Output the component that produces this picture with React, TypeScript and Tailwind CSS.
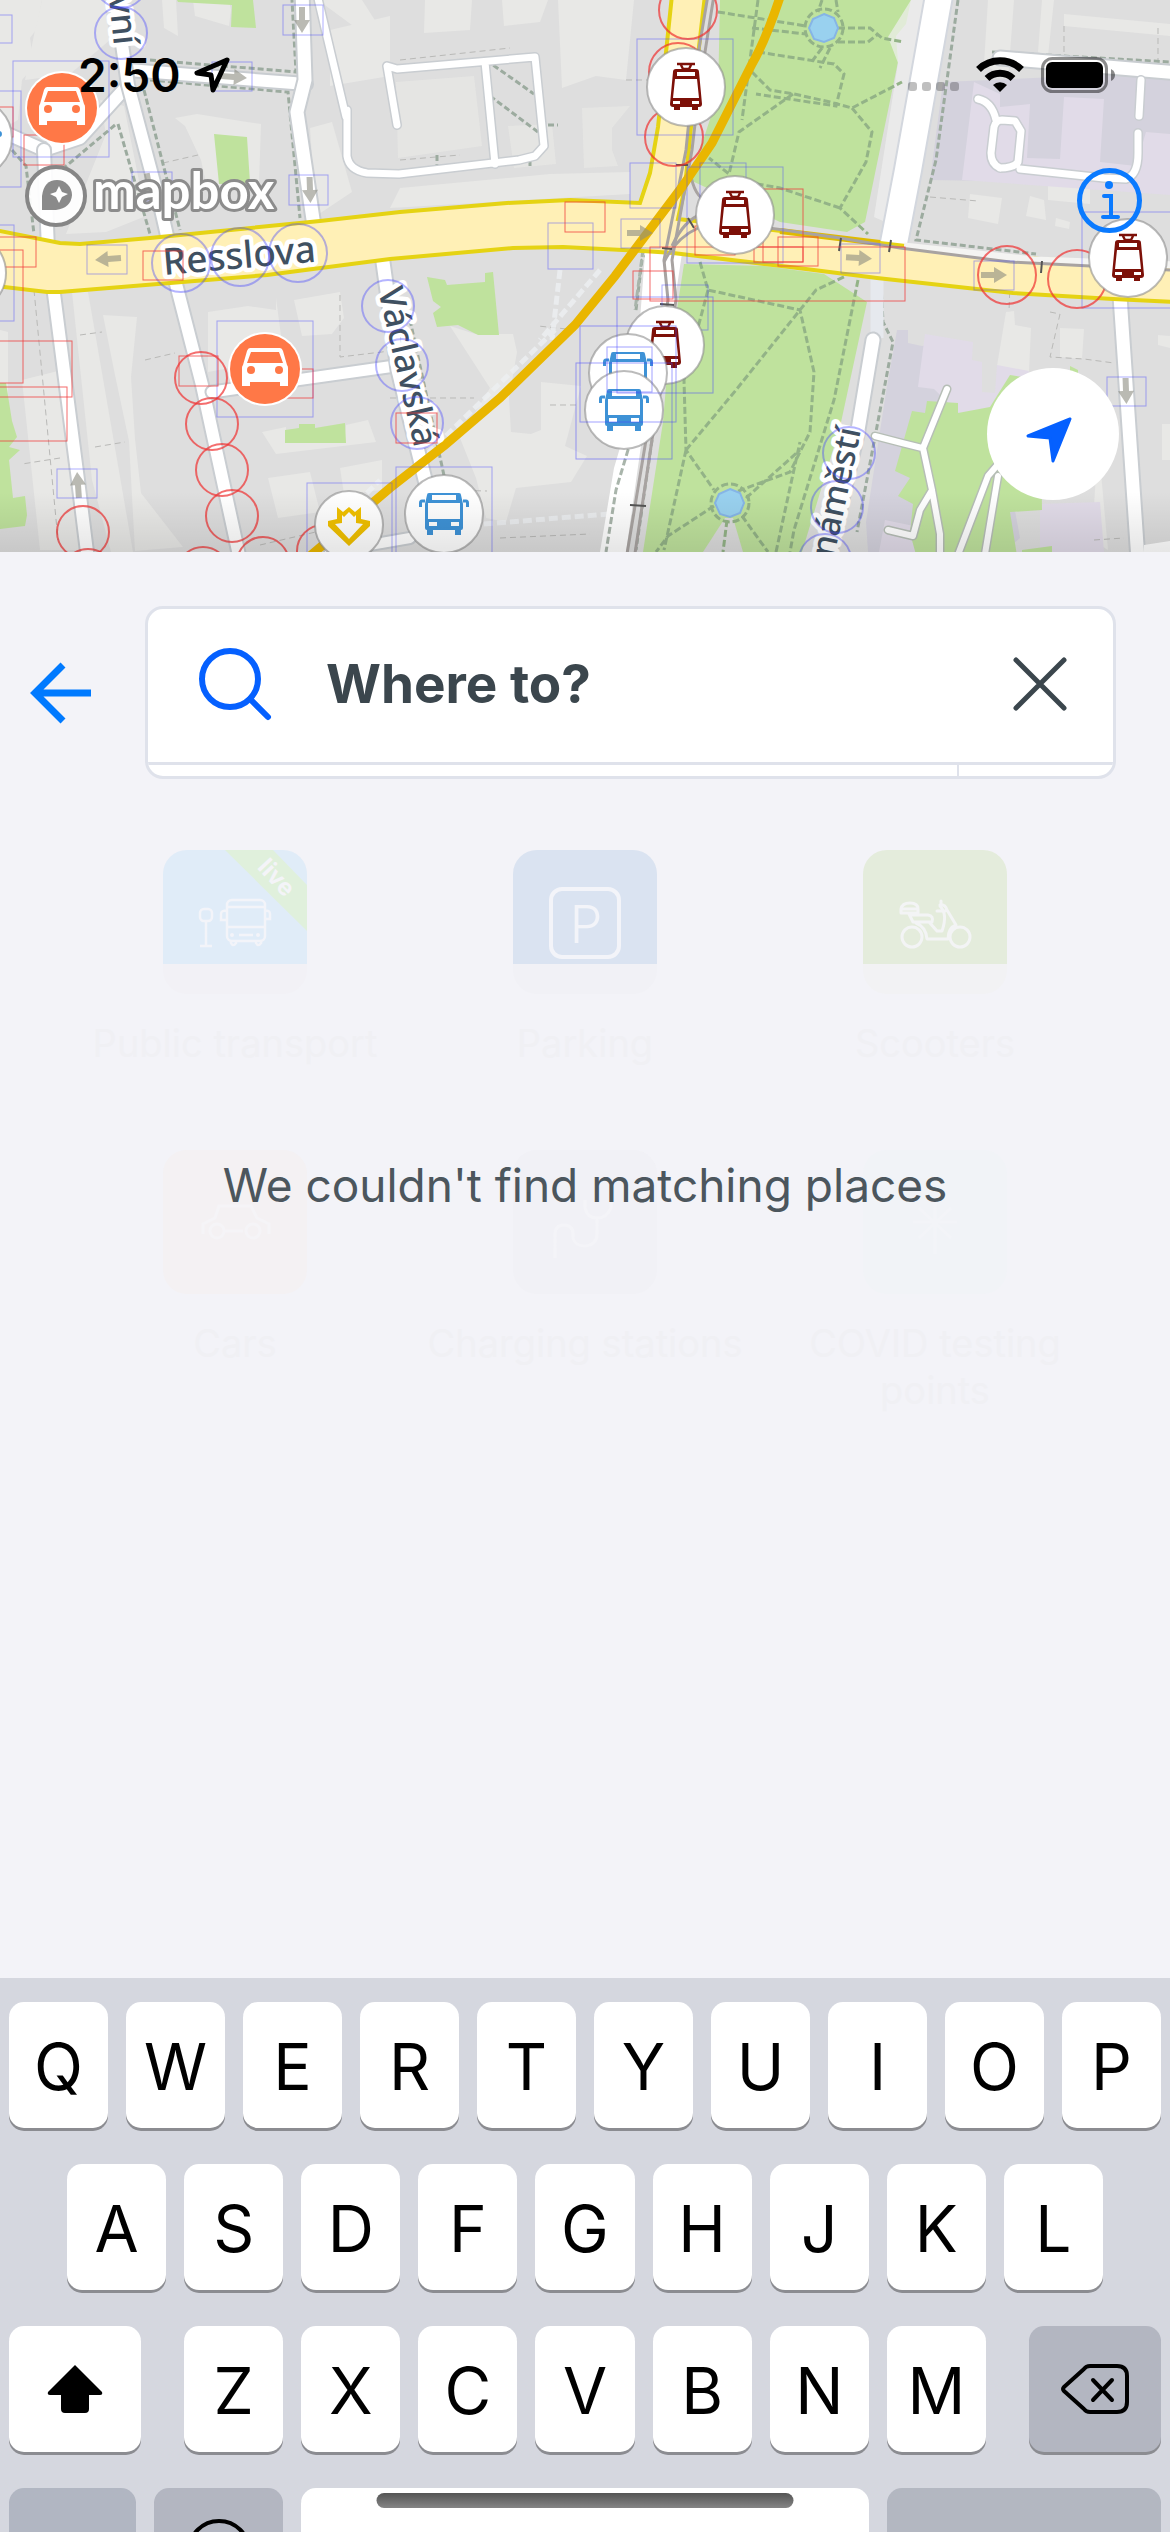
import React from "react";

const CASING = "#c9cdd1";

function Road({ d, w = 12, casing = CASING, edge = 4 }: { d: string; w?: number; casing?: string; edge?: number }) {
  return (
    <g fill="none" strokeLinejoin="round" strokeLinecap="round">
      <path d={d} stroke={casing} strokeWidth={w + edge} />
      <path d={d} stroke="#fff" strokeWidth={w} />
    </g>
  );
}

function Pin({ x, y, r = 39, children }: { x: number; y: number; r?: number; children?: React.ReactNode }) {
  return (
    <g transform={`translate(${x} ${y})`}>
      <circle r={r} fill="#fff" stroke="#8e8e8e" strokeOpacity={0.6} strokeWidth={2} />
      {children}
    </g>
  );
}

function TramIcon() {
  return (
    <g>
      <path d="M-9-23H9M-5-22l2 4M5-22l-2 4M-4-18H4" stroke="#7d1008" strokeWidth={2.4} fill="none" />
      <path fillRule="evenodd" fill="#7d1008" d="M-10-18H10q3 0 3 3L16 17q0 3-3 3h-1v3h-6v-3h-12v3h-6v-3h-1q-3 0-3-3L-13-15q0-3 3-3zM-9-15v4H9v-4zM-11-8L-13 11H13L11-8zM-13 14v3h7v-3zM6 14v3h7v-3z" />
    </g>
  );
}

function BusIcon() {
  return (
    <g fill="#3e92d6">
      <path fillRule="evenodd" d="M-15-21H15q2 0 2 2l2 9V14q0 2-2 2H17v5h-6v-5H-11v5h-6v-5q-2 0-2-2V-10l2-9q0-2 2-2zM-12-19v5H12v-5zM-16-11V5H16V-11zM-15 8v4h8V8zM7 8v4h8V8z" />
      <path d="M-19-13h-3q-1.500 0-1.500 2v4M19-13h3q1.500 0 1.500 2v4" fill="none" stroke="#3e92d6" strokeWidth={3} />
    </g>
  );
}

function CarPin({ x, y }: { x: number; y: number }) {
  return (
    <g transform={`translate(${x} ${y})`}>
      <circle r={37} fill="#fff" />
      <circle r={35} fill="#ff7847" />
      <path d="M-15-21H15q2 0 3 3L22-4q1 1 1 3V17h-8v-4H-15v4h-8V-1q0-2 1-3L-18-18q1-3 3-3zM-14-17L-18-6H18L14-17z" fill="#fff" fillRule="evenodd" />
      <circle cx={-14} cy={1} r={4} fill="#ff7847" />
      <circle cx={14} cy={1} r={4} fill="#ff7847" />
    </g>
  );
}

const blueBoxes = [
  [13, 61, 96, 96], [-5, 91, 26, 96], [-5, 15, 17, 28], [283, 5, 40, 30], [212, 62, 40, 29], [132, 172, 40, 29],
  [289, 175, 39, 30], [87, 245, 40, 29], [637, 39, 96, 96], [630, 163, 46, 45], [700, 163, 46, 45], [687, 167, 96, 96],
  [548, 223, 45, 46], [621, 219, 39, 29], [841, 244, 39, 29], [974, 261, 40, 29], [1082, 212, 96, 96], [57, 469, 40, 29],
  [217, 321, 96, 96], [307, 483, 85, 96], [-5, 225, 19, 96], [396, 467, 96, 96], [662, 285, 46, 45], [1107, 377, 39, 29],
];
const redBoxes = [
  [24, 135, 40, 30], [-5, 107, 18, 30], [-5, 237, 41, 30], [-5, 250, 28, 133], [143, 251, 40, 29], [565, 202, 40, 30],
  [650, 247, 255, 54], [633, 271, 40, 28], [695, 226, 40, 29], [754, 247, 49, 15], [778, 237, 40, 29], [763, 189, 40, 73],
  [-5, 341, 77, 56], [-5, 387, 72, 54], [179, 356, 39, 30], [283, 369, 30, 29], [396, 413, 41, 30],
];
const blueCircles = [
  [121, -18], [121, 33], [181, 263], [240, 257], [298, 253], [388, 306], [402, 365], [417, 423], [849, 453], [837, 507], [825, 560],
];
const redCircles = [
  [201, 378, 26], [212, 424, 26], [222, 470, 26], [232, 516, 26], [83, 532, 26], [263, 563, 26], [203, 573, 26],
  [88, 575, 26], [323, 551, 26], [688, 10, 29], [678, 72, 29], [674, 137, 29], [1007, 275, 29], [1077, 279, 29],
];
const arrows = [
  [302, 20, 90], [234, 77, 4], [149, 186, 80], [310, 190, 88], [108, 259, 176], [78, 485, -94], [640, 233, 0],
  [859, 258, 3], [994, 275, 0], [1126, 391, 88],
];

function CityMap() {
  return (
    <svg aria-label="Map of Prague" role="img" viewBox="0 0 1170 552" preserveAspectRatio="xMidYMid slice" className="block h-[552px] w-full">
      <defs>
        <linearGradient id="mapFade" x1="0" y1="0" x2="0" y2="1">
          <stop offset="0" stopColor="#000" stopOpacity="0" />
          <stop offset="1" stopColor="#000" stopOpacity="0.1" />
        </linearGradient>
      </defs>
      <rect width={1170} height={552} fill="#dedede" />

      {/* courtyards and open ground */}
      <g fill="#e8e8e6">
        <path d="M0 0h42l-6 30-6 8 4 28-12 14-4 40-18 10z" />
        <path d="M42 0h62l6 40-40 34-45 6 10-50zM162 0h14l2 36-14-8zM193 0h36l2 10-2 16-34-10z" />
        <path d="M318 0h44l14 22-20 6zM330 30l60-14v60l-60 10zM100 100l24 6 22 110-40 16-40 2 40-100z" />
        <path d="M175 118l22-4 50 8 14 2-2 60-52 4-6-28-16-34z" />
        <path d="M310 128l22-6 20 70-36 24z" />
        <path d="M425 0h47l-2 30-46 3zM502 0h46l-8 22-36 4zM558 0h76l-8 80-30-4-34 12z" />
        <path d="M582 108l48-2-18 22v22l6 16-34 2zM412 110l10-6 10 6v18l-18-2zM508 126l44-2 4 40-42 4zM396 82l78-6 8 70-84 12z" opacity={0.7} />
        <path d="M400 188l150-14 80-2v22l-240 14z" />
        <path d="M72 292h16l45 260h-22L92 480zM103 315l34 2-6 60 4 62 6 54 42 54-48 4-6-110-14-66z" />
        <path d="M208 312l40-6 28 4v-12l8 60-76 14zM294 300l46-8 4 26-12 16-30 2z" />
        <path d="M262 432l24-5v16h58l2-18 22-5 8 22-100 12zM268 478l42-6 10 40-42 6zM340 468l42-8v30l-38 4z" />
        <path d="M0 330l8 2v60l-8 40zM22 380l40-10 24 180H40z" />
        <path d="M450 326l25 8h38l4 18-8 46 2 34 20 2 10-4v-48l40 4-16 60 22 10-16 26-55 6-10 34-20-4-10-40-16-40 30-50z" />
        <path d="M988 0h26l-6 80-24-16zM1042 0h12l-6 56-10-4zM1064 14l106 10v12l-106-10z" />
        <path d="M970 194l32 4-4 26-30-6zM1030 196l14 4 2 20-20-4zM1048 186h42v18l-42-4zM1056 218l14 4-1 7-14-3z" />
        <path d="M1006 312l8-1 1 14 16 3-2 44-32-6zM1060 328l24 1-2 30-22-2zM1158 335l12 1v12l-12-3zM1162 424h8v36h-8z" />
        <path d="M1092 540l6-100 10 110z" />
      </g>
      {/* institution grounds */}
      <path d="M943 82l227-10v112l-240-4z" fill="#d4d2dd" />
      <path d="M974 82l26 12v13l30-3-3 54 33 1 4-62 40 2-4 63 36 4 10-34 24 2v61l-208-15z" fill="#e1dbe8" />
      <path d="M897 330h11v13l14 3 38-6v60l40 28 20 110-16 14H868l-2-30 20-130z" fill="#d4d2dd" />
      <path d="M925 334l48 8-1 18 10 2v30l13 1 2-28 32 6-6 40-56 10-33-32-16-2zM885 520l48 10v22h-54zM1040 504l60-2 4 50h-64z" fill="#e1dbe8" />

      {/* building outlines */}
      <g fill="none" stroke="#b9b9b7" strokeWidth={1} strokeDasharray="6 4">
        <path d="M34 290l24 250M80 335l22-3M145 360l30-7M163 163l35-8M95 447l30-5M340 295v62l50-6M60 458l-38 6M390 398h84M576 330l-38-4M260 545l60-14M550 405h26M445 490l42 1M500 538l90-4M930 197l48 4M1050 312l10 2-10 43 34 2 30 4" />
        <path d="M400 60l110-12M626 80h22M400 160l60-5M1064 26v26M1158 28v50M1010 282l-1 30M1094 540l30-2" />
      </g>

      {/* green areas */}
      <g fill="#bfe29d">
        <path d="M177 0h76l3 28-25-1 1-22-54-3zM214 134l33 3 3 46-31 1zM285 430l14-2v-4h16v4l30-5 1 20h-61zM0 383h6l6 38 5 16-8 10 11 3-11 10 4 38 12-2 2 19-2 11-25 3z" />
        <path d="M427 277l18 3 2 5 38-3v-9l8-1 6 63h-21l-20-10-21 2-4-14 8-6-8-6z" />
        <path d="M720 0h191l-5 24-10 12 2 26-33 160-18 10-67-10-90-42 28-85z" />
        <path d="M684 264l80 2 60 8 43 28-27 125-38 125H643l20-130 4-48z" />
        <path d="M912 411l13 2 2-12 31 2v10l32-6 20-32 30 5 2 130-32 2 8 50H918l-8-29 3-29-15-8 12-18-15-7z" />
        <path d="M1070 366l8 4v6l-8-4zM1022 550l30-4v6h-30z" />
      </g>
      <path d="M725 518h8l10 34h-40z" fill="#dcdcdc" />
      <path d="M911 0h14L892 225l-18-8 24-154-10-26z" fill="#f0f0f0" opacity={0.7} />

      {/* footpaths */}
      <g fill="none" stroke="#93b387" strokeWidth={3} strokeDasharray="7 3">
        <path d="M718 12l88 14M752 28l54 6M758 52l76 12 10 10-8 32-80-12M752 72l18 18 24 4 36 8 22 6 50-26M852 108l20 24-6 30-26 46 28 26M840 208l-60-20-34-6M793 94l-54 38-10 42-20-16M758 0l-16 120" />
        <path d="M838 28l32 0 12 10 22 4M838 42l30 0 10-8M822 48l-12 16M830 48l-10 20M822 0l-4 12M836 0l2 12" />
        <circle cx={824} cy={28} r={19} />
        <circle cx={730} cy={503} r={19} />
        <path d="M700 262l8 28 92 20 14 62-4 60-20 40-60 22M708 290l-24 90 2 70 28 40M686 450l50-60 80-100 30-14M746 498l54-48M714 506l-46 30-12 16M742 516l26 36M686 450l-22 100M858 280l-24 120-40 130-4 22M727 520l-4 32M776 552l24-110" />
      </g>
      <g fill="none" stroke="#9cab9f" strokeWidth={3} strokeDasharray="6 3">
        <path d="M150 60l146 12-4-72M150 80l138 12 12 126M144 90l36 140M115 125l-50 42M118 124l32 110M12 150l14 16 8 68M958 0l-22 160-20 80 120 14M992 52l178 10M410 320l35 160M636 310l6-50 6-6M652 440l-16 110M881 284l2 38 10 20-36 190" />
        <path d="M486 60l48 34M490 96l48 36M548 125h10M437 155v12M530 160v6" />
      </g>
      <g fill="none" stroke="#eceff1" strokeWidth={5} strokeDasharray="9 4" opacity={0.8}>
        <path d="M390 490L555 330M330 530l50-50M484 524l150-12M560 270l-8 70M600 270l-60 70" />
      </g>

      {/* streets */}
      <Road d="M-6 128L44 150 80 138 128 85" />
      <Road d="M44 150L48 250M53 286L78 480 88 560" />
      <Road d="M128 70L306 84" />
      <Road d="M114-10L128 85 160 205 168 240M175 280L202 385 240 560" />
      <Road d="M302-10L305 80 297 112 314 226" w={13} />
      <Road d="M316-10L346 117M347 110v46q2 14 20 17l32 1 120-14 16-4 9-10L535 57 397 69 387 66 397 125M485 62l10 102" w={7} edge={3} />
      <Road d="M212 392L395 366" w={11} />
      <Road d="M382 255L398 370 430 500 432 520" w={13} />
      <Road d="M330 552l80-14" w={10} />
      <Road d="M940-10L908 170 893 248" w={26} casing="#d3d7de" />
      <path d="M877 274v64" stroke="#e6e9ee" strokeWidth={13} />
      <Road d="M873 340L858 430 828 560" w={13} />
      <Road d="M1000 58L1180 73" w={13} />
      <Road d="M1141 80L1139 116M1138 133v20q0 22-12 26l-22-1-84-9M1000 168q-9-4-9-15l3-26q2-7 8-7l13 1 6 10-3 31q-4 6-18 6M996 120q-4-18-18-21" w={7} edge={3} />
      <Road d="M1120 296L1138 560" w={13} />
      <path d="M1144 545l26-4v14h-26z" fill="#fff" />
      <Road d="M875 436l27 7 20 5M947 389l-24 59 9 42 8 44v26M932 490l-12 20-7 26-25-6M956 560l32-84 12-14M984 560l14-84" w={6} edge={3} casing="#b6beb6" />
      <path d="M646 240h38l-12 80-26 90-20 142h-26l14-84 20-68z" fill="#fff" />
      <path d="M643 250l-8 60M634 430l-18 60-10 62" stroke="#a9b5ab" strokeWidth={3} strokeDasharray="7 3" fill="none" />

      {/* main avenue */}
      <path
        d="M-5 230L60 243 80 244 150 238 320 221 400 212 507 203 570 200 640 203 650 173 658 127 667 43 672-5H705L699 47 691 127 685 187 678 219 773 230 880 243 1000 257 1175 266V302L1113 299 1013 293 877 278 790 267 673 253 643 251 563 247 513 248 390 259 267 275 60 292 47 292-5 286z"
        fill="#fff0b6" stroke="#e5d313" strokeWidth={4}
      />
      <path d="M780 231l100 12" stroke="#dfba00" strokeWidth={6} />
      <path d="M904 246l130 14 141 5" stroke="#f4f4f2" strokeWidth={7} fill="none" />
      {/* tram tracks */}
      <g fill="none" stroke="#a8a3a1" strokeWidth={3}>
        <path d="M708-5L692 90 686 150 664 260 668 300 646 440 626 560M714-5L699 90 692 150 672 260 676 300 652 440 634 560" />
        <path d="M690 168q2 24 14 32M672 246q12-26 30-32M664 262q12-24 34-34" />
        <path d="M700 200l40 24 100 14 60 10 110 14 160 8" />
      </g>
      <path d="M676 165h12M662 248l10 1M688 218l6 10M630 505l16 1M660 304l14 1M841 238l-2 13M891 240l-2 12M1042 261l-1 12" stroke="#555" strokeWidth={2} />

      {/* metro line */}
      <path d="M781-6Q766 40 752 64L712 143 682 187 615 276 575 325 500 398 445 445 390 488 310 556" fill="none" stroke="#e9b600" strokeWidth={9} />

      {/* ponds */}
      <path d="M824 14l10 4 4 10-4 10-10 4-10-3-5-11 4-9z" fill="#99d1ef" stroke="#86b5e6" strokeWidth={2} />
      <path d="M730 489l10 4 4 10-4 10-10 4-10-3-5-11 4-9z" fill="#99d1ef" stroke="#86b5e6" strokeWidth={2} />

      {arrows.map(([x, y, a], i) => (
        <path key={i} transform={`translate(${x} ${y}) rotate(${a})`} d="M-13-3H0V-8L13 0 0 8V3H-13z" fill="#8c8c80" fillOpacity={0.6} />
      ))}

      {/* street names */}
      <g fontFamily='"Noto Sans", "Open Sans", sans-serif' fontWeight={500} fill="#3f5061" stroke="#fff" strokeWidth={9} strokeLinejoin="round" paintOrder="stroke">
        <text transform="translate(164 275) rotate(-5)" fontSize={37}>Resslova</text>
        <text transform="translate(378 290) rotate(77)" fontSize={35}>Václavská</text>
        <text transform="translate(114 46) rotate(84)" textAnchor="end" fontSize={35}>vní</text>
        <text transform="translate(861 430) rotate(-78)" textAnchor="end" fontSize={34}>náměstí</text>
      </g>

      {/* collision outlines */}
      <g fill="none" stroke="#4646ff" strokeOpacity={0.45} strokeWidth={1}>
        {blueBoxes.map(([x, y, w, h], i) => <rect key={i} x={x} y={y} width={w} height={h} />)}
      </g>
      <g fill="none" stroke="#4646ff" strokeOpacity={0.4} strokeWidth={2}>
        {blueCircles.map(([x, y], i) => <circle key={i} cx={x} cy={y} r={i > 1 && i < 5 ? 29 : 26} />)}
      </g>
      <g fill="none" stroke="#f03838" strokeOpacity={0.75} strokeWidth={1}>
        {redBoxes.map(([x, y, w, h], i) => <rect key={i} x={x} y={y} width={w} height={h} />)}
      </g>
      <g fill="none" stroke="#f03030" strokeOpacity={0.7} strokeWidth={2}>
        {redCircles.map(([x, y, r], i) => <circle key={i} cx={x} cy={y} r={r} />)}
      </g>

      {/* stops and vehicles */}
      <Pin x={-27} y={138} />
      <circle cx={-1} cy={134} r={3} fill="#3e92d6" />
      <Pin x={-33} y={273} />
      <Pin x={686} y={87}><TramIcon /></Pin>
      <Pin x={735} y={215}><TramIcon /></Pin>
      <Pin x={1128} y={258}><TramIcon /></Pin>
      <Pin x={665} y={345}><TramIcon /></Pin>
      <Pin x={628} y={373}><BusIcon /></Pin>
      <Pin x={624} y={410}><BusIcon /></Pin>
      <Pin x={444} y={514}><BusIcon /></Pin>
      <Pin x={349} y={525} r={34}>
        <path fillRule="evenodd" fill="#f0c000" d="M-12-18L-6-13 0-18 6-13 12-18V-6L21-4V1L0 21-21 1V-4L-12-6zM-7-10V-2L-14-1 0 14 14-1 7-2V-10L5-8 0-13-5-8z" />
      </Pin>
      <CarPin x={62} y={108} />
      <CarPin x={265} y={369} />
      <g fill="none" stroke="#4646ff" strokeOpacity={0.5}>
        <rect x={607} y={347} width={45} height={45} />
        <rect x={576} y={363} width={96} height={96} />
        <rect x={580} y={326} width={96} height={96} />
        <rect x={617} y={297} width={96} height={96} />
      </g>

      {/* mapbox attribution */}
      <circle cx={56} cy={196} r={29} fill="#fff" fillOpacity={0.92} stroke="#868686" strokeWidth={4} />
      <path d="M42 210V196Q44 180 57 180A15 15 0 0 1 72 195Q71 208 56 210z" fill="#8a8a8a" />
      <path d="M59 186l3 6 6 2-6 3-3 6-3-6-6-3 6-2z" fill="#fff" />
      <text x={93} y={209} fontFamily="Lato, sans-serif" fontWeight={700} fontSize={51} fill="#fff" stroke="#8c8c8c" strokeWidth={6} strokeLinejoin="round" paintOrder="stroke">mapbox</text>

      <rect y={492} width={1170} height={60} fill="url(#mapFade)" />
    </svg>
  );
}

function StatusBar() {
  return (
    <div className="absolute inset-x-0 top-0 flex h-[150px] items-center justify-between pr-[54px] pl-[78px] text-black">
      <div className="flex items-center gap-3">
        <span className="text-[46px] leading-none font-semibold">2:50</span>
        <svg viewBox="0 0 38 38" className="h-[38px] w-[38px]" aria-hidden="true">
          <path d="M34 4L4 17l14 2 2 15z" fill="none" stroke="currentColor" strokeWidth={5} strokeLinejoin="round" />
        </svg>
      </div>
      <div className="flex items-center">
        <div className="mt-[22px] mr-[16px] flex gap-[5px]">
          {[0, 1, 2, 3].map((i) => <span key={i} className="h-[9px] w-[9px] rounded-[3px] bg-black/25" />)}
        </div>
        <svg viewBox="0 0 50 36" className="mr-[16px] h-[36px] w-[50px]" aria-label="Wi-Fi" role="img">
          <path d="M3.500 12.500a31 31 0 0 1 43 0" fill="none" stroke="currentColor" strokeWidth={7} />
          <path d="M12 21.500a19 19 0 0 1 26 0" fill="none" stroke="currentColor" strokeWidth={7} />
          <path d="M25 35l-7-7a10 10 0 0 1 14 0z" fill="currentColor" />
        </svg>
        <svg viewBox="0 0 75 36" className="h-[36px] w-[75px]" aria-label="Battery full" role="img">
          <rect x={1.500} y={1.500} width={64} height={33} rx={10} fill="none" stroke="#000" strokeOpacity={0.45} strokeWidth={3} />
          <rect x={5} y={5} width={57} height={26} rx={6} fill="#000" />
          <path d="M70 12q4 2 4 6t-4 6z" fill="#000" fillOpacity={0.45} />
        </svg>
      </div>
    </div>
  );
}

function Tile({ top, base, children }: { top: string; base: string; children?: React.ReactNode }) {
  return (
    <svg viewBox="0 0 144 144" className="h-[144px] w-[144px] rounded-[24px]" aria-hidden="true">
      <rect width={144} height={144} fill={base} />
      <rect width={144} height={114} fill={top} />
      {children}
    </svg>
  );
}

const categories: { label: string; tile: React.ReactNode }[] = [
  {
    label: "Public transport",
    tile: (
      <Tile top="#e0ecf8" base="#f2f1f6">
        <path d="M62 0h48l34 35v46z" fill="#e0f0dc" />
        <text x={0} y={6} transform="translate(112 29) rotate(47)" textAnchor="middle" fontFamily="Inter, sans-serif" fontWeight={700} fontSize={24} fill="#f4f4f8">live</text>
        <g fill="none" stroke="#f3f4f9" strokeWidth={2.500}>
          <rect x={37} y={59} width={12} height={12} rx={4} />
          <path d="M43 71v26M37 96h12M64 57h38M64 77h38M64 61q-6-1-6 3v6h6M102 61q5-1 5 3v5h-5M76 85h14M68 91v2q2 4 5 0v-2M93 91v2q2 4 5 0v-2" />
          <rect x={64} y={50} width={38} height={41} rx={5} />
        </g>
        <circle cx={69} cy={85} r={2} fill="#f3f4f9" />
        <circle cx={95} cy={85} r={2} fill="#f3f4f9" />
      </Tile>
    ),
  },
  {
    label: "Parking",
    tile: (
      <Tile top="#dae3f1" base="#f1f1f6">
        <rect x={38} y={39} width={68} height={68} rx={11} fill="none" stroke="#f3f4f9" strokeWidth={4} />
        <text x={73} y={93} textAnchor="middle" fontFamily="Inter, sans-serif" fontWeight={300} fontSize={52} fill="#f3f4f9">P</text>
      </Tile>
    ),
  },
  {
    label: "Scooters",
    tile: (
      <Tile top="#e4ecdc" base="#f2f2f4">
        <g fill="none" stroke="#f3f4f5" strokeWidth={3} strokeLinejoin="round" strokeLinecap="round">
          <circle cx={49} cy={87} r={10} />
          <circle cx={97} cy={87} r={10} />
          <path d="M38 63v-4q1-6 9-6 8 0 8 6v4zM38 59h17M46 64l4 8h19q2-6-4-7H49M53 73q10 4 11 16h21q0-11 8-14L84 60q-2-6-7-5M77 56q8 8 2 25h-5L66 72M78 51v5M74 61h8" />
        </g>
      </Tile>
    ),
  },
  {
    label: "Cars",
    tile: (
      <Tile top="#f4f1f3" base="#f4f1f3">
        <g fill="none" stroke="#f5f4f7" strokeWidth={3}>
          <path d="M40 84V74l12-6 4-12h32l6 12 12 6v10M62 81h18" />
          <circle cx={54} cy={81} r={7} />
          <circle cx={90} cy={81} r={7} />
        </g>
      </Tile>
    ),
  },
  {
    label: "Charging stations",
    tile: (
      <Tile top="#f1f1f6" base="#f1f1f6">
        <path d="M42 108V84q0-9 9-9t9 9v4q2 8 12 8 12-1 12-12V68M72 50v8q2 10 12 10t14-10v-8" fill="none" stroke="#f4f4f8" strokeWidth={3} />
      </Tile>
    ),
  },
  {
    label: "COVID testing points",
    tile: (
      <Tile top="#f1f3f7" base="#f1f3f7">
        <path d="M50 72h44M72 52v52M56 58l32 30M88 58L56 88" fill="none" stroke="#f3f4f8" strokeWidth={3} />
      </Tile>
    ),
  },
];

const keyBase = "flex h-[126px] items-center justify-center rounded-[15px] shadow-[0_3px_0_#8b8c91] text-black";

function LetterKey({ letter }: { letter: string }) {
  return (
    <button type="button" className={`${keyBase} min-w-0 flex-1 bg-white pt-1 text-[64px] leading-none font-normal`}>
      {letter}
    </button>
  );
}

function Keyboard() {
  return (
    <div className="h-[554px] shrink-0 overflow-hidden bg-[#d5d7df] px-[9px] pt-[24px]">
      <div className="flex flex-col gap-[36px]">
        <div className="flex gap-[18px]">
          {"QWERTYUIOP".split("").map((l) => <LetterKey key={l} letter={l} />)}
        </div>
        <div className="flex gap-[18px] px-[58px]">
          {"ASDFGHJKL".split("").map((l) => <LetterKey key={l} letter={l} />)}
        </div>
        <div className="flex gap-[43px]">
          <button type="button" aria-label="Shift" className={`${keyBase} w-[132px] shrink-0 bg-white`}>
            <svg viewBox="0 0 58 52" className="h-[52px] w-[58px]" aria-hidden="true">
              <path d="M29 2L56 29q1 3-2 3H43v14q0 4-4 4H19q-4 0-4-4V32H4q-3 0-2-3z" fill="currentColor" />
            </svg>
          </button>
          <div className="flex min-w-0 flex-1 gap-[18px]">
            {"ZXCVBNM".split("").map((l) => <LetterKey key={l} letter={l} />)}
          </div>
          <button type="button" aria-label="Delete" className={`${keyBase} w-[132px] shrink-0 bg-[#b3b6c1]`}>
            <svg viewBox="0 0 70 52" className="h-[52px] w-[70px]" aria-hidden="true">
              <path d="M30 3H57q10 0 10 10V39q0 10-10 10H30q-4 0-6-3L4 28q-2-2 0-4L24 6q2-3 6-3zM33 17L52 37M52 17L33 37" fill="none" stroke="currentColor" strokeWidth={4} strokeLinecap="round" strokeLinejoin="round" />
            </svg>
          </button>
        </div>
        <div className="flex gap-[18px]">
          <button type="button" aria-label="Numbers" className={`${keyBase} w-[127px] shrink-0 bg-[#b1b6c2]`} />
          <button type="button" aria-label="Emoji" className={`${keyBase} w-[129px] shrink-0 bg-[#b3b6c1]`}>
            <svg viewBox="0 0 64 64" className="h-[64px] w-[64px]" aria-hidden="true">
              <circle cx={32} cy={32} r={30} fill="none" stroke="currentColor" strokeWidth={4} />
              <path d="M17 38q15 16 30 0" fill="none" stroke="currentColor" strokeWidth={4} />
            </svg>
          </button>
          <button type="button" aria-label="Space" className={`${keyBase} min-w-0 flex-1 bg-white`} />
          <button type="button" aria-label="Return" className={`${keyBase} w-[274px] shrink-0 bg-[#b3b7c1]`} />
        </div>
      </div>
    </div>
  );
}

export default function App() {
  return (
    <main className="relative flex min-h-screen flex-col overflow-hidden bg-[#f3f3f8] font-['Inter',sans-serif]">
      <header className="relative shrink-0">
        <CityMap />
        <StatusBar />
        <button type="button" aria-label="Information" className="absolute top-[168px] right-[28px] h-[65px] w-[65px] text-[#0a7aff]">
          <svg viewBox="0 0 65 65" className="h-full w-full" aria-hidden="true">
            <circle cx={32.500} cy={32.500} r={30} fill="none" stroke="currentColor" strokeWidth={5} />
            <circle cx={32} cy={17} r={4} fill="currentColor" />
            <path d="M27 28h7v21M26 49h15" fill="none" stroke="currentColor" strokeWidth={4} strokeLinecap="round" />
          </svg>
        </button>
        <button type="button" aria-label="My location" className="absolute top-[368px] right-[51px] flex h-[132px] w-[132px] items-center justify-center rounded-full bg-white">
          <svg viewBox="0 0 48 48" className="mt-3 mr-2 h-[48px] w-[48px]" aria-hidden="true">
            <path d="M45 3L3 20l22 2 3 23z" fill="#0560ff" stroke="#0560ff" strokeWidth={3} strokeLinejoin="round" />
          </svg>
        </button>
      </header>

      <section className="flex-1">
        <div className="flex items-center pt-[54px] pr-[54px]">
          <button type="button" aria-label="Back" className="flex h-[100px] w-[145px] shrink-0 items-center pl-[30px] text-[#007aff]">
            <svg viewBox="0 0 62 62" className="h-[62px] w-[62px]" aria-hidden="true">
              <path d="M61 31H5M33 3L5 31 33 59" fill="none" stroke="currentColor" strokeWidth={7} />
            </svg>
          </button>
          <div className="min-w-0 flex-1 overflow-hidden rounded-[18px] border-[3px] border-[#dfe2eb] bg-white">
            <div className="flex h-[153px] items-center pr-[46px] pb-1 pl-[50px]">
              <svg viewBox="0 0 74 74" className="h-[74px] w-[74px] shrink-0" aria-hidden="true">
                <circle cx={32} cy={32} r={28} fill="none" stroke="#0560ff" strokeWidth={6} />
                <path d="M52 52L70 70" stroke="#0560ff" strokeWidth={6} strokeLinecap="round" />
              </svg>
              <input
                type="text"
                aria-label="Where to?"
                placeholder="Where to?"
                className="ml-[54px] min-w-0 flex-1 bg-transparent text-[53px] leading-[64px] font-bold outline-none placeholder:text-[#3b464d] placeholder:opacity-100"
              />
              <button type="button" aria-label="Clear" className="shrink-0 text-[#3b464d]">
                <svg viewBox="0 0 54 54" className="h-[54px] w-[54px]" aria-hidden="true">
                  <path d="M3 3L51 51M51 3L3 51" stroke="currentColor" strokeWidth={5} strokeLinecap="round" />
                </svg>
              </button>
            </div>
            <div className="flex h-[14px] border-t-[3px] border-[#dfe2eb]">
              <div className="flex-1" />
              <div className="w-[156px] border-l-2 border-[#dfe2eb]" />
            </div>
          </div>
        </div>

        <div className="mt-[71px] grid">
          <ul className="col-start-1 row-start-1 grid grid-cols-3 gap-y-[83px] px-[60px]">
            {categories.map((c) => (
              <li key={c.label} className="flex flex-col items-center">
                {c.tile}
                <span className="mt-[26px] max-w-[340px] text-center text-[38px] leading-[47px] text-[#f0f0f4]">
                  {c.label}
                </span>
              </li>
            ))}
          </ul>
          <p className="col-start-1 row-start-1 pt-[303px] text-center text-[46px] leading-[64px] text-[#4c565d]">
            We couldn't find matching places
          </p>
        </div>
      </section>

      <Keyboard />
      <div className="absolute bottom-[24px] left-1/2 h-[15px] w-[417px] -translate-x-1/2 rounded-full bg-linear-to-b from-[#555] to-[#858585]" />
    </main>
  );
}
